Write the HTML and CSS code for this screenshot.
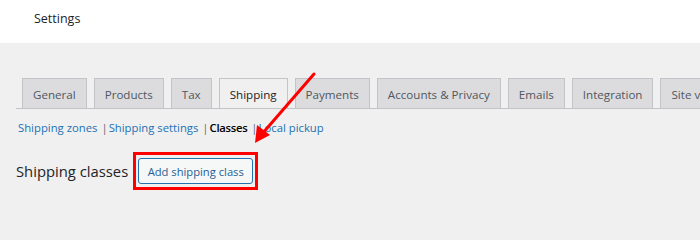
FILE: index.html
```
<!DOCTYPE html>
<html>
<head>
<meta charset="utf-8">
<link rel="stylesheet" href="styles.css">
</head>
<body>
<header class="topbar"><span class="title">Settings</span></header>
<main class="wrap">
  <nav class="tabs">
    <span class="tab">General</span>
    <span class="tab">Products</span>
    <span class="tab">Tax</span>
    <span class="tab active">Shipping</span>
    <span class="tab">Payments</span>
    <span class="tab">Accounts &amp; Privacy</span>
    <span class="tab">Emails</span>
    <span class="tab">Integration</span>
    <span class="tab">Site visibility</span>
  </nav>
  <ul class="subnav">
    <li><a class="sublink">Shipping zones</a><span class="sep">|</span></li>
    <li><a class="sublink">Shipping settings</a><span class="sep">|</span></li>
    <li><a class="sublink current">Classes</a><span class="sep">|</span></li>
    <li><a class="sublink">Local pickup</a></li>
  </ul>
  <div class="heading-row">
    <h2 class="heading">Shipping classes</h2>
    <span class="highlight"><button class="btn">Add shipping class</button></span>
  </div>
</main>
<svg class="arrow" width="700" height="200" viewBox="0 0 700 200">
  <line x1="314" y1="74" x2="262" y2="134" stroke="#f00" stroke-width="3" stroke-linecap="round"/>
  <polygon points="255,143 257,125 270,135" fill="#f00"/>
</svg>
</body>
</html>
```
FILE: styles.css
```
html {
  margin: 0;
  padding: 0;
  width: 700px;
  height: 200px;
  overflow: hidden;
}
body {
  margin: 0;
  padding: 0;
  width: 700px;
  height: 200px;
  overflow: hidden;
  background: #f0f0f1;
  font-family: "Open Sans", "Noto Sans", sans-serif;
  color: #1d2327;
  position: relative;
}
.topbar {
  height: 43px;
  background: #fff;
  box-sizing: border-box;
  padding: 6px 0 0 34px;
}
.title {
  font-size: 12.5px;
  line-height: 18px;
  color: #1d2327;
}
.wrap {
  padding: 0 0 0 16px;
}
.tabs {
  margin-top: 35px;
  display: flex;
  gap: 7px;
  padding-left: 6px;
  border-bottom: 1px solid #c3c4c7;
  white-space: nowrap;
  height: 31px;
  box-sizing: border-box;
  overflow: hidden;
}
.tab {
  flex-shrink: 0;
  box-sizing: border-box;
  height: 32px;
  padding: 0 10px;
  border: 1px solid #c3c4c7;
  border-bottom: none;
  background: #dcdcde;
  color: #50575e;
  font-size: 11.6px;
  line-height: 31px;
}
.tab.active {
  background: #f0f0f1;
  color: #1d2327;
}
.subnav {
  list-style: none;
  margin: 10px 0 0 2px;
  padding: 0;
  display: flex;
  font-size: 11.3px;
  line-height: 18px;
}
.sublink {
  color: #2271b1;
}
.sublink.current {
  color: #000;
  font-weight: 600;
  letter-spacing: -0.3px;
}
.sep {
  color: #646970;
  padding: 0 1px 0 4px;
}
.heading-row {
  display: flex;
  align-items: center;
  margin-top: 15px;
}
.heading {
  margin: 0;
  font-size: 14.8px;
  font-weight: 400;
  color: #1d2327;
}
.highlight {
  margin-left: 5px;
  border: 3px solid #f00;
  padding: 3px 2px;
  display: flex;
}
.btn {
  font-family: inherit;
  height: 26px;
  width: 115px;
  box-sizing: border-box;
  padding: 0;
  background: #f6f7f7;
  border: 1px solid #2271b1;
  border-radius: 3px;
  color: #1f5f96;
  font-size: 11.2px;
}
.arrow {
  position: absolute;
  left: 0;
  top: 0;
  pointer-events: none;
}
```
